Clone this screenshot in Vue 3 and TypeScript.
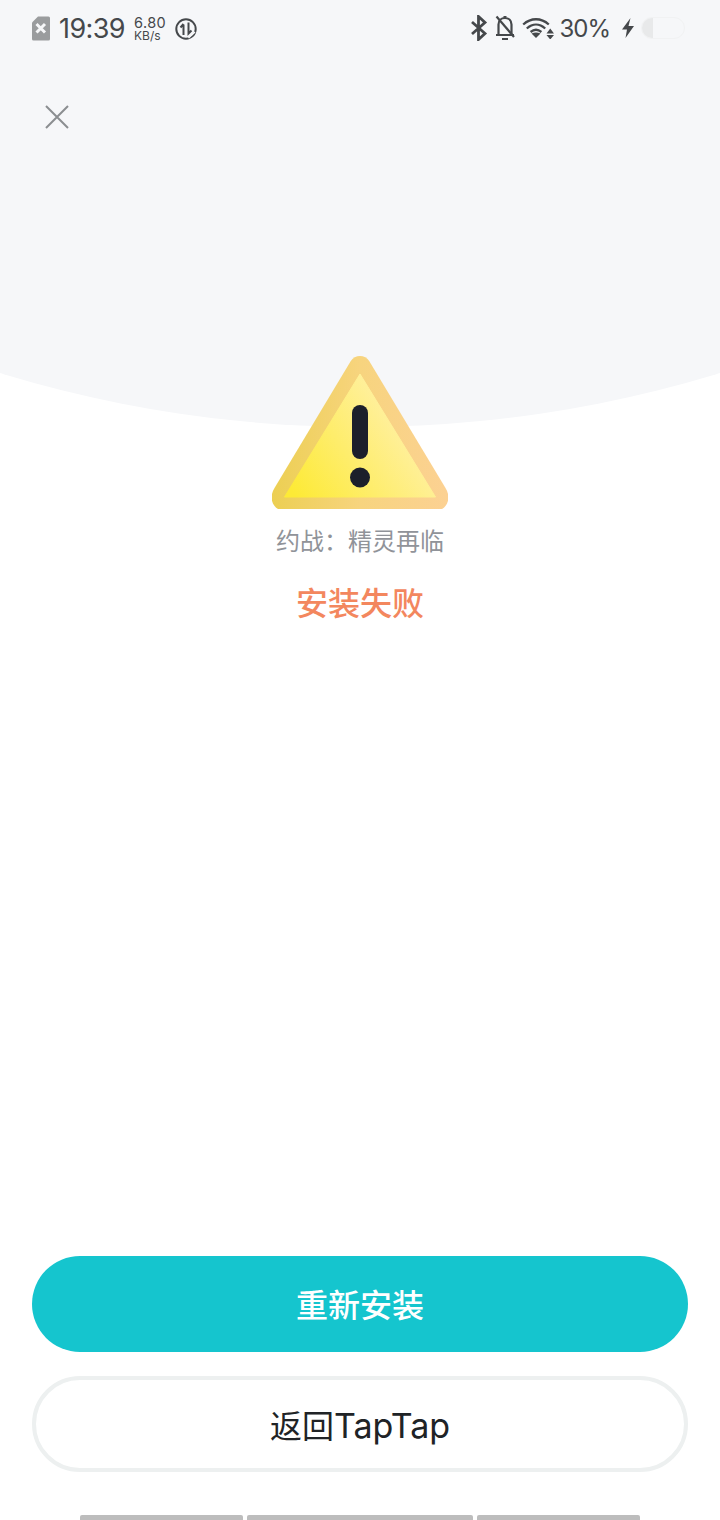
<script setup lang="ts">
const title: string = '约战：精灵再临'
</script>

<template>
  <div class="page">
    <div class="arc"></div>
    <header class="status">
      <div class="status-left">
        <svg class="sim" width="18" height="25" viewBox="0 0 18 25">
          <path d="M6 0.500H16.500a1.500 1.500 0 0 1 1.500 1.500V23a1.500 1.500 0 0 1-1.500 1.500H1.500A1.500 1.500 0 0 1 0 23V6.500Z" fill="#9a9c9e" />
          <path d="M4.500 8l8.500 8.500M13 8l-8.500 8.500" stroke="#f6f7f9" stroke-width="3" fill="none" />
        </svg>
        <span class="time">19:39</span>
        <span class="speed"><span class="speed-num">6.80</span><span class="speed-unit">KB/s</span></span>
        <svg class="data" width="22" height="22" viewBox="0 0 22 22">
          <circle cx="11" cy="11" r="9.700" fill="none" stroke="#45484b" stroke-width="2" />
          <path d="M8.500 17V6.500M5.500 9.500L8.500 6" fill="none" stroke="#45484b" stroke-width="2" />
          <path d="M13.500 4.500V15.500L16.500 12.500" fill="none" stroke="#45484b" stroke-width="2" />
          <path d="M13.500 20l6.500-6" stroke="#f6f7f9" stroke-width="1.500" />
        </svg>
      </div>
      <div class="status-right">
        <svg width="18" height="26" viewBox="0 0 18 26">
          <path d="M2 7L15 18.500L8.500 24.500V1.500L15 7.500L2 19" fill="none" stroke="#45484b" stroke-width="2.800" />
        </svg>
        <svg class="bell" width="22" height="26" viewBox="0 0 22 26">
          <path d="M4.500 19.500V9.500C4.500 5.500 7.200 3 11 3s6.500 2.500 6.500 6.500V19.500M2 20H20M8 24H14M9.500 2H12.500" fill="none" stroke="#45484b" stroke-width="2.200" />
          <path d="M2.500 1.500L20 22" stroke="#45484b" stroke-width="2.200" />
        </svg>
        <svg class="wifi" width="32" height="22" viewBox="0 0 32 22">
          <path d="M1.200 7.500C9 .5 19 .5 26.800 7.500M4.800 11.500C10.500 6.300 17.500 6.300 23.200 11.500M8.600 15C12 12.200 16 12.200 19.400 15" fill="none" stroke="#45484b" stroke-width="2.300" />
          <path d="M9.500 16.500C12.500 15 15.500 15 18.500 16.500L14 21Z" fill="#45484b" />
          <path d="M24.500 16.500L28.250 11.500L32 16.500ZM24.500 18L28.250 22.500L32 18Z" fill="#45484b" />
        </svg>
        <span class="pct">30%</span>
        <svg class="bolt" width="12" height="20" viewBox="0 0 12 20">
          <path d="M8.500 0L0 11.500H5L3.500 20L12 8H6.500Z" fill="#45484b" />
        </svg>
        <div class="battery"><div class="battery-fill"></div></div>
      </div>
    </header>

    <button class="close" type="button" aria-label="关闭">
      <svg width="26" height="26" viewBox="0 0 26 26">
        <path d="M2 2L24 24M24 2L2 24" stroke="#8b8e91" stroke-width="2" fill="none" />
      </svg>
    </button>

    <main class="result">
      <svg class="warning" width="176" height="153" viewBox="0 0 176 153">
        <defs>
          <linearGradient id="outerGrad" x1="0" y1="0" x2="1" y2="0">
            <stop offset="0" stop-color="#eccf52" />
            <stop offset="0.5" stop-color="#f7d47e" />
            <stop offset="1" stop-color="#fcd193" />
          </linearGradient>
          <linearGradient id="innerGrad" x1="0.05" y1="0.95" x2="0.85" y2="0.5">
            <stop offset="0" stop-color="#fdea36" />
            <stop offset="1" stop-color="#fff0a0" />
          </linearGradient>
        </defs>
        <path d="M78.500 5.500C83 -1.800 93 -1.800 97.500 5.500L173.500 132C179.500 142 175 150 170 153H6C1 150 -3.500 142 2.500 132Z" fill="url(#outerGrad)" />
        <path d="M88 18L163.500 141H12.500Z" fill="url(#innerGrad)" stroke="url(#innerGrad)" stroke-width="1" stroke-linejoin="round" />
        <rect x="80" y="49" width="16" height="54" rx="8" fill="#1c1f2b" />
        <circle cx="88" cy="121.500" r="10" fill="#1c1f2b" />
      </svg>
      <p class="name">{{ title }}</p>
      <p class="state">安装失败</p>
    </main>

    <footer class="actions">
      <button class="btn primary" type="button">重新安装</button>
      <button class="btn secondary" type="button">返回<span class="latin">TapTap</span></button>
    </footer>

    <div class="nav-bar">
      <span class="seg s1"></span>
      <span class="seg s2"></span>
      <span class="seg s3"></span>
    </div>
  </div>
</template>

<style scoped>
.page {
  position: relative;
  width: 720px;
  height: 1520px;
  overflow: hidden;
  background: #ffffff;
  display: flex;
  flex-direction: column;
  font-family: "Inter", "Noto Sans CJK SC", sans-serif;
}
.arc {
  position: absolute;
  left: -867px;
  top: -2027px;
  width: 2454px;
  height: 2454px;
  border-radius: 50%;
  background: #f6f7f9;
}
.status {
  position: relative;
  height: 56px;
  padding: 0 35px 0 32px;
  display: flex;
  align-items: center;
  justify-content: space-between;
  color: #45484b;
}
.status-left, .status-right {
  display: flex;
  align-items: center;
}
.sim { margin-top: 1px; }
.time {
  margin-left: 9px;
  width: 66px;
  font-size: 27px;
  line-height: 32px;
  margin-top: 2px;
  font-family: "Inter", sans-serif;
  letter-spacing: -0.6px;
  white-space: nowrap;
}
.speed {
  margin-left: 9px;
  margin-top: 2px;
  width: 34px;
  display: flex;
  flex-direction: column;
  font-family: "Inter", sans-serif;
}
.speed-num { font-size: 14.500px; line-height: 14px; letter-spacing: 0.4px; }
.speed-unit { font-size: 12px; line-height: 12px; }
.data { margin-left: 7px; margin-top: 1px; }
.bell { margin-left: 6px; }
.wifi { margin-left: 6px; }
.pct {
  margin-left: 5px;
  font-size: 24px;
  line-height: 32px;
  margin-top: 2px;
  font-family: "Inter", sans-serif;
  letter-spacing: -1px;
}
.bolt { margin-left: 12px; }
.battery {
  margin-left: 7px;
  width: 44px;
  height: 22px;
  border-radius: 11px;
  border: 1px solid #f1f2f3;
  overflow: hidden;
  box-sizing: border-box;
}
.battery-fill {
  width: 11px;
  height: 100%;
  background: #e8e9ea;
}
.close {
  position: relative;
  align-self: flex-start;
  margin: 48px 0 0 44px;
  padding: 0;
  width: 26px;
  height: 26px;
  border: 0;
  background: transparent;
  display: block;
}
.close svg { display: block; }
.result {
  position: relative;
  margin-top: 226px;
  display: flex;
  flex-direction: column;
  align-items: center;
}
.warning { display: block; }
.name {
  margin: 17px 0 0;
  font-size: 24px;
  line-height: 32px;
  letter-spacing: 0;
  color: #909399;
}
.state {
  margin: 25px 0 0;
  font-size: 32px;
  line-height: 42px;
  font-weight: 500;
  color: #f3875e;
}
.actions {
  position: relative;
  margin-top: auto;
  padding: 0 32px;
  display: flex;
  flex-direction: column;
  gap: 24px;
}
.btn {
  height: 96px;
  border-radius: 48px;
  font-family: inherit;
  font-size: 32px;
  padding: 0;
}
.primary {
  border: 0;
  padding-bottom: 2px;
  background: #15c5ce;
  color: #ffffff;
  font-weight: 500;
}
.secondary {
  border: 4px solid #edf0f0;
  background: #ffffff;
  color: #202326;
  font-weight: 400;
}
.latin { font-size: 34px; }
.nav-bar {
  position: relative;
  margin-top: 43px;
  height: 5px;
  padding: 0 80px;
  display: flex;
  gap: 4px;
}
.seg {
  height: 5px;
  background: #bdbdbd;
  border-radius: 2px 2px 0 0;
}
.s1 { width: 163px; }
.s2 { width: 226px; }
.s3 { width: 163px; }
</style>
